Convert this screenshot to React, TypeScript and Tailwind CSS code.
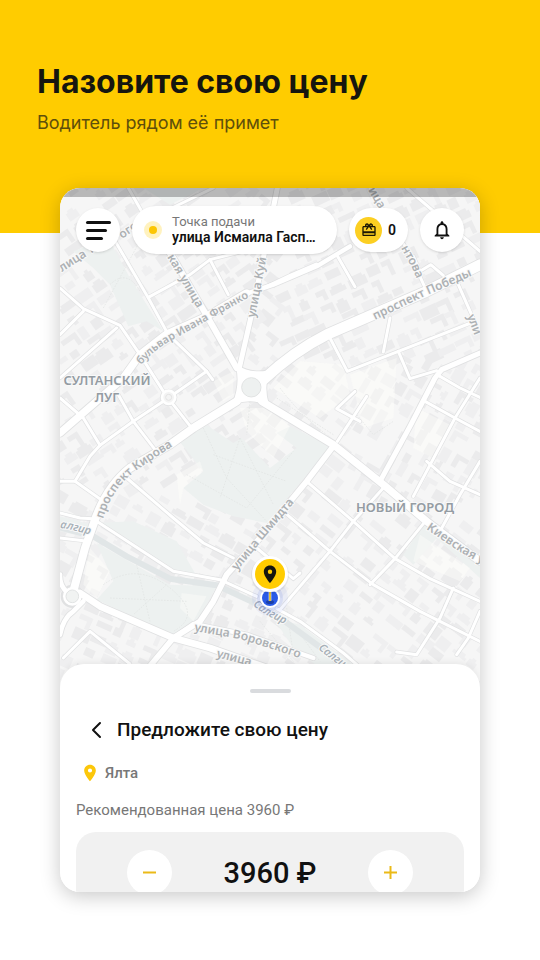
import { useState } from "react";
import { MdCardGiftcard, MdLocationOn, MdNotificationsNone } from "react-icons/md";

const PRICE_STEP = 10;
const RECOMMENDED_PRICE = 3960;

// Map geometry is drawn on a 1260 x 1500 grid
const MINOR_ROADS = [
  "M160 150 265 330 325 440 440 550 458 575",
  "M265 328 390 260 450 215 570 185 690 120",
  "M450 215 505 320",
  "M0 300 70 362 180 412 240 500 310 610",
  "M0 440 70 370",
  "M0 570 170 420",
  "M0 630 70 690 120 772",
  "M0 880 45 880 90 805 120 772 220 700 325 630 440 550",
  "M45 880 130 940",
  "M175 620 220 700 285 785",
  "M340 650 392 716",
  "M830 200 885 296",
  "M770 228 690 262 610 300",
  "M930 0 1050 200 1092 292",
  "M1060 205 1080 250 1112 230 1150 262",
  "M1040 0 1260 190",
  "M305 75 460 0",
  "M205 0 265 105",
  "M1195 290 1240 392",
  "M810 450 862 550 1015 490 1240 402",
  "M990 390 970 492",
  "M1015 490 1050 572 1130 548",
  "M1135 562 1200 600 1260 628",
  "M1095 640 1185 690 1260 730",
  "M1060 925 1185 690 1260 570",
  "M1140 1030 1200 920 1260 820",
  "M1100 820 1170 880 1260 920",
  "M832 760 920 625",
  "M900 700 830 662 885 610",
  "M200 870 340 990 430 1065 520 1110",
  "M740 880 880 1000 1005 1112 1110 1172 1260 1240",
  "M670 970 810 1090 940 1190 1080 1270 1260 1360",
  "M970 900 880 1000 810 1090 660 1265",
  "M1100 995 1005 1112 930 1190",
  "M1180 1200 1140 1290 1070 1400 1010 1392",
  "M1260 1270 1225 1350 1190 1400",
  "M590 1080 700 1172 720 1155",
  "M0 975 60 990 110 993",
  "M0 1050 70 1058",
  "M110 1000 340 1150 480 1175 590 1225",
  "M650 1262 720 1300 850 1395 960 1490",
  "M10 1410 90 1330 210 1428",
];

const MAIN_ROADS = [
  { d: "M340 1350 400 1308 560 1340 760 1410", w: 13 },
  { d: "M550 320 640 290 770 235 870 175", w: 13 },
  { d: "M1260 495 1145 545 1125 570 1050 715 960 880", w: 15 },
  { d: "M820 775 740 880 600 1050 500 1160 460 1240 420 1300 340 1350 265 1440", w: 17 },
  { d: "M255 90 340 210 450 400 530 540", w: 18 },
  { d: "M652 0 640 60 612 200 570 400 538 540", w: 15 },
  { d: "M0 735 190 570 240 500 320 438 440 385 560 315", w: 22 },
  { d: "M60 1215 120 1255 340 1350 450 1380 620 1440", w: 20 },
  { d: "M0 1340Q10 1290 40 1270L70 1240M0 1160Q-2 1190 20 1212", w: 14 },
  { d: "M40 1210 75 1080 100 1010Q135 900 210 840L330 770 400 720 530 640", w: 24 },
  { d: "M605 640 820 770 970 890 1100 1000 1260 1120", w: 22 },
  { d: "M610 575Q700 490 800 440L950 375 1100 310 1260 230", w: 32 },
];

const ROUNDABOUT = "M532 535Q565 560 622 552Q608 600 622 648Q575 625 522 645Q545 590 532 535Z";

const PARKS = [
  "M40 190 100 240 150 290 210 270 150 160 90 170Z",
  "M150 290 210 270 310 430 260 400 205 415Z",
  "M250 0 330 50 430 0Z",
  "M430 705 520 765 545 750 630 840 710 780 650 735 690 715 812 775 620 1005 520 985 430 950 370 900 430 850 350 750Z",
  "M110 1065 330 1190 470 1195 410 1305 340 1342 110 1235 160 1180Z",
  "M640 1290 720 1310 880 1430 780 1440 700 1380Z",
  "M110 1005 330 1150 410 1165 350 1060 220 1000Z",
  "M1090 1010 1260 1120 1260 1170 1130 1050 1060 1130 1030 1100Z",
  "M0 985 95 1010 90 1050 0 1030Z",
];

const CREAM = [
  "M640 600 720 520 850 530 870 620 780 690Z",
  "M460 580 520 550 520 620 490 640Z",
  "M350 860 420 820 430 850 370 900 360 950Z",
  "M540 660 620 660 690 715 640 810 560 730Z",
  "M870 560 1010 510 1000 690 910 720Z",
  "M1070 660 1170 710 1120 810 1060 780Z",
  "M1080 1040 1230 1140 1200 1180 1060 1120Z",
  "M90 1080 150 1150 110 1230 70 1190Z",
  "M365 1215 440 1225 400 1300 360 1260Z",
];

const FOOTPATHS = [
  "M430 720 500 870 620 1000M380 860 560 960 700 790M540 750 480 930M540 750 640 950M460 800 680 880",
  "M130 1190Q230 1120 330 1200T340 1330M150 1230 380 1240M230 1130 270 1300M320 1190 220 1280",
  "M660 600Q720 680 800 740M650 630 820 740M570 640 560 740",
  "M130 360 250 140M150 290Q200 240 240 310",
  "M680 1260 700 1400M700 1310 780 1420M600 1300 700 1420",
  "M890 680 940 740 1000 700",
];

type Building = { d: string; x: number; y: number; angle: number; tone: string };

function districtAngle(x: number, y: number) {
  if (y > 1150 && x < 640) return 24;
  if (x < 560 && y > 900) return 30;
  if (x > 640 && y < 520) return -25;
  if (x > 860 && y < 960) return -60;
  if (x > 560) return 38;
  return y < 650 ? -35 : -33;
}

// Seeded, so the city blocks stay the same between renders
function createBuildings(): Building[] {
  let seed = 4177;
  const random = () => {
    seed = (seed * 1664525 + 1013904223) % 4294967296;
    return seed / 4294967296;
  };
  const buildings: Building[] = [];

  [24, 30, -25, -60, 38, -35, -33].forEach((angle) => {
    const rad = (angle * Math.PI) / 180;
    for (let u = -1600; u < 1600; u += 54) {
      for (let v = -1600; v < 1600; v += 44) {
        const jitter = random() * 14;
        const x = Math.round(630 + u * Math.cos(rad) - v * Math.sin(rad) + jitter);
        const y = Math.round(740 + u * Math.sin(rad) + v * Math.cos(rad) - jitter);
        if (x < -20 || x > 1280 || y < -20 || y > 1500) continue;
        if (districtAngle(x, y) !== angle || random() < 0.1) continue;
        const w = Math.round(24 + random() * 30);
        const h = Math.round(15 + random() * 24);
        const kind = random();
        let d = `M0 0h${w}v${h}h${-w}z`;
        if (kind > 0.7) d = `M0 0h${w}v${h + 12}h-14v-${h - 4}h${14 - w}z`;
        else if (kind > 0.4) d = `M0 7h8v-7h${w - 14}v9h8v${h - 6}h${-w - 2}z`;
        buildings.push({ d, x, y, angle, tone: random() > 0.5 ? "#ebebec" : "#efeff0" });
      }
    }
  });
  return buildings;
}

const BUILDINGS = createBuildings();

const STREET_LABELS = [
  { id: "west", d: "M2 84 30 66 60 48", text: "лица Т", size: 12 },
  { id: "west-end", d: "M62 51 90 32", text: "ого", size: 12 },
  { id: "skaya", d: "M107 69 138 122 160 160", text: "кая улица", size: 12 },
  { id: "kuybysheva", d: "M195 130 208 62 214 20", text: "улица Куй", size: 12 },
  { id: "franko", d: "M81 177Q96 160 116 150L150 131 200 103", text: "бульвар Ивана Франко", size: 11 },
  { id: "pobedy", d: "M315 132 365 108 435 78", text: "проспект Победы", size: 12 },
  { id: "north", d: "M308 2 330 40", text: "ица", size: 12 },
  { id: "north-end", d: "M341 60 352 80 366 112", text: "нтова", size: 12 },
  { id: "east", d: "M407 128 414 146 422 170", text: "ули", size: 12 },
  { id: "kirova", d: "M43 331Q52 300 78 281L130 247", text: "проспект Кирова", size: 12 },
  { id: "shmidta", d: "M177 383 204 350 250 296", text: "улица Шмидта", size: 12 },
  { id: "kievskaya", d: "M366 341 400 364 460 397", text: "Киевская у", size: 12 },
  { id: "vorovskogo", d: "M134 443 180 451 215 462 260 477", text: "улица Воровского", size: 12 },
  { id: "south", d: "M156 469 195 479 250 492", text: "улица", size: 12 },
];

const RIVER_LABELS = [
  { id: "river-west", d: "M0 340 8 341 40 349", text: "алгир" },
  { id: "river-mid", d: "M193 417Q206 429 232 439", text: "Салгир" },
  { id: "river-east", d: "M258 461 280 478 310 502", text: "Салги" },
];

function CityMap() {
  return (
    <svg
      viewBox="0 0 420 500"
      preserveAspectRatio="xMidYMin slice"
      className="block aspect-[420/500] w-full bg-[#f6f6f6] font-['Noto_Sans',sans-serif]"
      role="img"
      aria-label="Карта города"
    >
      <g transform="scale(0.33333)">
        {CREAM.map((d) => (
          <path key={d} d={d} fill="#fafaf8" />
        ))}
        {BUILDINGS.map((b, i) => (
          <path key={i} d={b.d} fill={b.tone} transform={`translate(${b.x} ${b.y}) rotate(${b.angle})`} />
        ))}
        {PARKS.map((d) => (
          <path key={d} d={d} fill="#edf1f0" />
        ))}
        {CREAM.map((d) => (
          <path key={d} d={d} fill="#fafaf8" opacity="0.55" />
        ))}
        {FOOTPATHS.map((d) => (
          <path key={d} d={d} fill="none" stroke="#dfe2e1" strokeWidth="2" strokeDasharray="5 4" />
        ))}
        <path
          d="M0 1018 100 1045 200 1105 330 1172 470 1192 570 1238 650 1282 800 1392 860 1450"
          fill="none"
          stroke="#e1e6e7"
          strokeWidth="18"
          strokeLinejoin="round"
        />

        {/* Road edges first, then the white surface on top */}
        <g fill="none" strokeLinejoin="round" strokeLinecap="round">
          <g stroke="#e0e1e2">
            {MINOR_ROADS.map((d) => (
              <path key={d} d={d} strokeWidth="13" />
            ))}
            {MAIN_ROADS.map((r) => (
              <path key={r.d} d={r.d} strokeWidth={r.w + 5} />
            ))}
            <path d={ROUNDABOUT} strokeWidth="13" />
            <circle cx="326" cy="628" r="20" strokeWidth="12" />
            <circle cx="37" cy="1225" r="26" strokeWidth="18" />
          </g>
          <g stroke="#ffffff">
            {MINOR_ROADS.map((d) => (
              <path key={d} d={d} strokeWidth="9" />
            ))}
            {MAIN_ROADS.map((r) => (
              <path key={r.d} d={r.d} strokeWidth={r.w} />
            ))}
            <path d={ROUNDABOUT} fill="#fff" strokeWidth="8" />
          </g>
        </g>
        <circle cx="326" cy="628" r="20" fill="#f4f4f4" stroke="#fff" strokeWidth="8" />
        <circle cx="326" cy="628" r="9" fill="none" stroke="#e3e3e3" strokeWidth="3" />
        <circle cx="574" cy="598" r="29" fill="#eef1f0" stroke="#e1e3e3" strokeWidth="3" />
        <circle cx="37" cy="1225" r="28" fill="#fff" />
        <circle cx="37" cy="1225" r="19" fill="#f1f3f2" stroke="#e1e3e3" strokeWidth="3" />
      </g>

      <g fill="#adb1b4" stroke="#f9f9f9" strokeWidth="2" paintOrder="stroke" fontWeight="600">
        {STREET_LABELS.map((label) => (
          <g key={label.id}>
            <path id={label.id} d={label.d} fill="none" stroke="none" />
            <text fontSize={label.size}>
              <textPath href={`#${label.id}`}>{label.text}</textPath>
            </text>
          </g>
        ))}
        {RIVER_LABELS.map((label) => (
          <g key={label.id} fill="#a8b1b8" fontStyle="italic">
            <path id={label.id} d={label.d} fill="none" stroke="none" />
            <text fontSize="11">
              <textPath href={`#${label.id}`}>{label.text}</textPath>
            </text>
          </g>
        ))}
      </g>
      <g
        fill="#949ca3"
        stroke="#f9f9f9"
        strokeWidth="2"
        paintOrder="stroke"
        fontSize="13"
        fontWeight="600"
        textAnchor="middle"
      >
        <text x="47" y="197">СУЛТАНСКИЙ</text>
        <text x="47" y="214">ЛУГ</text>
        <text x="345" y="324">НОВЫЙ ГОРОД</text>
      </g>

      {/* Current position */}
      <circle cx="210" cy="410" r="18" fill="#2f5be8" opacity="0.06" />
      <circle cx="210" cy="410" r="13" fill="#2f5be8" opacity="0.1" />
      <circle cx="210" cy="410" r="10" fill="#fff" />
      <circle cx="210" cy="410" r="8" fill="#2a5be6" />
      <ellipse cx="210" cy="414" rx="4" ry="2" fill="#1b3fa8" />
      <path d="M210 402V413" stroke="#fff" strokeWidth="4" opacity="0.3" />
      <path d="M210 400V413" stroke="#e0c042" strokeWidth="2" />

      {/* Pickup pin */}
      <circle cx="210" cy="387" r="19" fill="#000" opacity="0.06" />
      <circle cx="210" cy="386" r="18" fill="#fff" />
      <circle cx="210" cy="386" r="15" fill="#ffcc00" />
      <path
        d="M210 377.500c-3.500 0-6.200 2.700-6.200 6.200 0 4.600 6.200 11.300 6.200 11.300s6.200-6.700 6.200-11.300c0-3.500-2.700-6.200-6.200-6.200zm0 8.400a2.200 2.200 0 1 1 0-4.400 2.200 2.200 0 0 1 0 4.400z"
        fill="#14150f"
      />
    </svg>
  );
}

function TopBar() {
  return (
    <div className="absolute inset-x-0 top-0">
      <div className="h-[9px] bg-black/25" />
      <div className="flex items-center gap-3 px-4 pt-[9px] pb-4">
        <button
          type="button"
          aria-label="Меню"
          className="flex size-11 shrink-0 flex-col justify-center gap-[5px] rounded-full bg-white pl-[10px] shadow-sm"
        >
          <span className="h-[3px] w-[25px] rounded-full bg-[#111]" />
          <span className="h-[3px] w-[21px] rounded-full bg-[#111]" />
          <span className="h-[3px] w-[17px] rounded-full bg-[#111]" />
        </button>
        <button
          type="button"
          className="flex h-12 min-w-0 flex-1 items-center gap-[10px] rounded-full bg-white px-3 text-left shadow-sm"
        >
          <span className="flex size-[18px] shrink-0 items-center justify-center rounded-full bg-[#ffcc00]/25">
            <span className="size-2 rounded-full bg-[#fcc603]" />
          </span>
          <span className="min-w-0">
            <span className="block text-[13px] leading-[14px] text-[#777]">Точка подачи</span>
            <span className="block truncate text-[14px] leading-4 font-semibold text-[#111]">
              улица Исмаила Гасп…
            </span>
          </span>
        </button>
        <button
          type="button"
          aria-label="Бонусы: 0"
          className="flex h-11 shrink-0 items-center gap-[6px] rounded-full bg-white pr-3 pl-[6px] shadow-sm"
        >
          <span className="flex size-[27px] items-center justify-center rounded-full bg-[#fccf22]">
            <MdCardGiftcard className="size-4 text-[#1c1804]" />
          </span>
          <span className="text-[14px] font-semibold text-[#111]">0</span>
        </button>
        <button
          type="button"
          aria-label="Уведомления"
          className="flex size-11 shrink-0 items-center justify-center rounded-full bg-white shadow-sm"
        >
          <MdNotificationsNone className="size-[22px] text-[#111]" />
        </button>
      </div>
    </div>
  );
}

function PriceSheet() {
  const [price, setPrice] = useState(RECOMMENDED_PRICE);

  return (
    <section className="relative -mt-6 rounded-t-3xl bg-white px-4 pt-[25px] shadow-[0_-2px_6px_rgba(0,0,0,0.06)]">
      <div className="mx-auto h-1 w-[41px] rounded-full bg-[#d9dbde]" />
      <div className="mt-[25px] flex items-center gap-[13px] pl-[12px]">
        <button type="button" aria-label="Назад" className="flex h-6 w-4 items-center justify-center">
          <svg viewBox="0 0 16 24" className="h-6 w-4" fill="none" stroke="#111" strokeWidth="2" strokeLinecap="round">
            <path d="M12 5 5 12l7 7" strokeLinejoin="round" />
          </svg>
        </button>
        <h2 className="text-[19px] leading-6 font-medium text-[#111]">Предложите свою цену</h2>
      </div>
      <div className="mt-[21px] flex items-center gap-[5px] pl-1">
        <MdLocationOn className="size-5 text-[#fcc70a]" />
        <span className="text-[15px] leading-5 font-medium text-[#777]">Ялта</span>
      </div>
      <p className="mt-[17px] text-[15px] leading-5 text-[#777]">Рекомендованная цена {RECOMMENDED_PRICE} ₽</p>
      <div className="mt-3 flex h-[60px] items-start justify-between overflow-hidden rounded-t-[20px] bg-[#f1f1f1] px-[51px] pt-[18px]">
        <button
          type="button"
          aria-label="Уменьшить цену"
          className="flex size-[45px] items-center justify-center rounded-full bg-white"
          onClick={() => setPrice((prev) => Math.max(0, prev - PRICE_STEP))}
        >
          <svg viewBox="0 0 13 13" className="size-[13px]" stroke="#ebba18" strokeWidth="2">
            <path d="M0 6.500h13" />
          </svg>
        </button>
        <output className="text-[29px] leading-[46px] font-medium text-[#111]">{price} ₽</output>
        <button
          type="button"
          aria-label="Увеличить цену"
          className="flex size-[45px] items-center justify-center rounded-full bg-white"
          onClick={() => setPrice((prev) => prev + PRICE_STEP)}
        >
          <svg viewBox="0 0 13 13" className="size-[13px]" stroke="#ebba18" strokeWidth="2">
            <path d="M0 6.500h13M6.500 0v13" />
          </svg>
        </button>
      </div>
    </section>
  );
}

export default function App() {
  return (
    <main className="min-h-screen bg-white pb-16">
      <header className="bg-[#ffcc00] px-[37px] pt-[61px] pb-[97px] font-['Inter',sans-serif]">
        <h1 className="text-[32px] leading-[42px] font-bold text-[#16160f]">Назовите свою цену</h1>
        <p className="mt-[7px] text-[18px] leading-[26px] text-[#5e4f0b]">Водитель рядом её примет</p>
      </header>
      <div className="relative mx-[60px] -mt-[45px] overflow-hidden rounded-[20px] bg-white font-['Roboto',sans-serif] shadow-[0_4px_20px_rgba(0,0,0,0.22)]">
        <CityMap />
        <TopBar />
        <PriceSheet />
      </div>
    </main>
  );
}
